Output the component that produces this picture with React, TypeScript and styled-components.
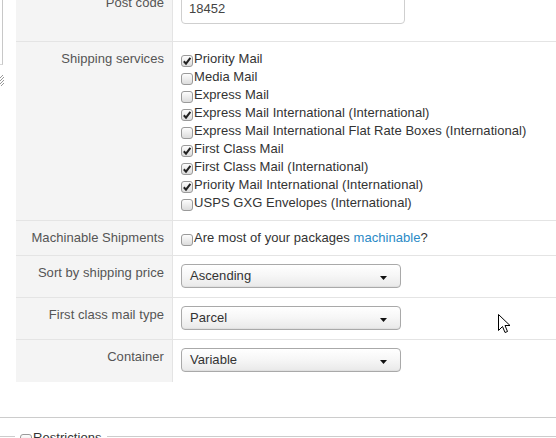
import React from "react";
import styled, { createGlobalStyle } from "styled-components";

const GlobalStyle = createGlobalStyle`
  html, body { margin: 0; padding: 0; background: #fff; overflow: hidden; }
  body { font-family: "Liberation Sans", Arial, sans-serif; font-size: 13px; color: #333; letter-spacing: 0.05px; }
`;

const Page = styled.div`
  position: relative;
  width: 556px;
  height: 438px;
  overflow: hidden;
`;

const Top = styled.div`
  display: flex;
  margin-top: -14px;
`;

const Gutter = styled.div`
  width: 16px;
  flex: none;
  padding-top: 14px;
  display: flex;
  flex-direction: column;
`;

const TextareaEdge = styled.div`
  width: 3px;
  height: 65px;
  border-right: 1px solid #c8c8c8;
  border-bottom: 1px solid #d8d8d8;
  box-sizing: border-box;
`;

const Grip = styled.svg`
  margin-top: 10px;
  display: block;
`;

const Table = styled.div`
  flex: 1;
  display: grid;
  grid-template-columns: 157px 1fr;
`;

const Label = styled.div<{ $first?: boolean }>`
  background: #f4f4f4;
  border-right: 1px solid #e4e4e4;
  border-top: ${(p) => (p.$first ? "none" : "1px solid #e4e4e4")};
  padding: 8px 8px 0 0;
  text-align: right;
  line-height: 18px;
  color: #555;
`;

const Value = styled.div<{ $first?: boolean; $select?: boolean; $pb?: number }>`
  border-top: ${(p) => (p.$first ? "none" : "1px solid #e4e4e4")};
  padding: 8px 8px ${(p) => (p.$pb ?? (p.$select ? 9 : 8))}px 8px;
  line-height: 18px;
  color: #333;
`;

const TextInput = styled.div`
  box-sizing: border-box;
  width: 224px;
  height: 30px;
  border: 1px solid #cfcfcf;
  border-radius: 4px;
  padding: 0 7px;
  line-height: 28px;
  color: #444;
  background: #fff;
`;

const CheckList = styled.div`
  display: flex;
  flex-direction: column;
`;

const CheckRow = styled.label`
  display: block;
  line-height: 18px;
  white-space: nowrap;
`;

const Box = styled.span`
  display: inline-block;
  box-sizing: border-box;
  width: 12px;
  height: 12px;
  border: 1px solid #9a9a9a;
  border-radius: 3px;
  background: linear-gradient(#fdfdfd, #dcdcdc);
  vertical-align: -4px;
  margin-right: 1px;
  position: relative;
`;

const CheckSvg = styled.svg`
  position: absolute;
  left: 0;
  top: 0;
`;

const Link = styled.a`
  color: #2a8ac6;
  text-decoration: none;
`;

const SelectBox = styled.div`
  box-sizing: border-box;
  width: 220px;
  height: 24px;
  border: 1px solid #a9a9a9;
  border-radius: 4px;
  background: linear-gradient(#ffffff 0%, #f6f6f6 50%, #e9e9e9 100%);
  box-shadow: inset 0 -1px 1px rgba(0, 0, 0, 0.04);
  display: flex;
  align-items: center;
  justify-content: space-between;
  padding: 0 13px 0 8px;
  color: #333;
  line-height: 22px;
`;

const Divider = styled.div`
  margin-top: 35px;
  height: 1px;
  background: #cccccc;
`;

const FieldsetHead = styled.div`
  display: flex;
  margin-top: 11px;
  line-height: 18px;
`;

const Rule = styled.div<{ $w?: number }>`
  height: 1px;
  background: #cccccc;
  margin-top: 7px;
  ${(p) => (p.$w ? `width: ${p.$w}px; flex: none;` : "flex: 1;")}
`;

const Legend = styled.div`
  padding: 0 5px;
  white-space: nowrap;
  color: #333;
`;

const Cursor = styled.svg`
  position: absolute;
  left: 498px;
  top: 314px;
`;

const Check = ({ checked }: { checked?: boolean }) => (
  <Box>
    {checked && (
      <CheckSvg width="10" height="10" viewBox="0 0 10 10">
        <path d="M1.8 5.2 L4 7.6 L8.4 1.8" fill="none" stroke="#222" strokeWidth="2" />
      </CheckSvg>
    )}
  </Box>
);

const Select = ({ value }: { value: string }) => (
  <SelectBox>
    <span>{value}</span>
    <svg width="7" height="4" viewBox="0 0 7 4" style={{ marginTop: 3 }}>
      <path d="M0 0 H7 L3.5 4 Z" fill="#111" />
    </svg>
  </SelectBox>
);

const services: [string, boolean][] = [
  ["Priority Mail", true],
  ["Media Mail", false],
  ["Express Mail", false],
  ["Express Mail International (International)", true],
  ["Express Mail International Flat Rate Boxes (International)", false],
  ["First Class Mail", true],
  ["First Class Mail (International)", true],
  ["Priority Mail International (International)", true],
  ["USPS GXG Envelopes (International)", false],
];

export default function App() {
  return (
    <Page>
      <GlobalStyle />
      <Top>
        <Gutter>
          <TextareaEdge />
          <Grip width="4" height="11" viewBox="0 0 4 11">
            <path d="M0 3 L3 0 M0 6 L4 2 M0 9 L4 5 M1 11 L4 8" stroke="#999" strokeWidth="1" fill="none" />
          </Grip>
        </Gutter>
        <Table>
          <Label $first>Post code</Label>
          <Value $first $pb={17}>
            <TextInput>18452</TextInput>
          </Value>

          <Label>Shipping services</Label>
          <Value>
            <CheckList>
              {services.map(([name, on]) => (
                <CheckRow key={name}>
                  <Check checked={on} />
                  {name}
                </CheckRow>
              ))}
            </CheckList>
          </Value>

          <Label>Machinable Shipments</Label>
          <Value>
            <CheckRow>
              <Check />
              Are most of your packages <Link href="#">machinable</Link>?
            </CheckRow>
          </Value>

          <Label>Sort by shipping price</Label>
          <Value $select>
            <Select value="Ascending" />
          </Value>

          <Label>First class mail type</Label>
          <Value $select>
            <Select value="Parcel" />
          </Value>

          <Label>Container</Label>
          <Value $select $pb={10}>
            <Select value="Variable" />
          </Value>
        </Table>
      </Top>
      <Divider />
      <FieldsetHead>
        <Rule $w={15} />
        <Legend>
          <Check />
          Restrictions
        </Legend>
        <Rule />
      </FieldsetHead>
      <Cursor width="13" height="20" viewBox="0 0 13 20">
        <path
          d="M0.5 0.5 L0.5 16.5 L4.5 12.5 L7 18.5 L9.5 17.5 L7 11.5 L12 11.5 Z"
          fill="#fff"
          stroke="#000"
          strokeWidth="1"
          strokeLinejoin="miter"
        />
      </Cursor>
    </Page>
  );
}
